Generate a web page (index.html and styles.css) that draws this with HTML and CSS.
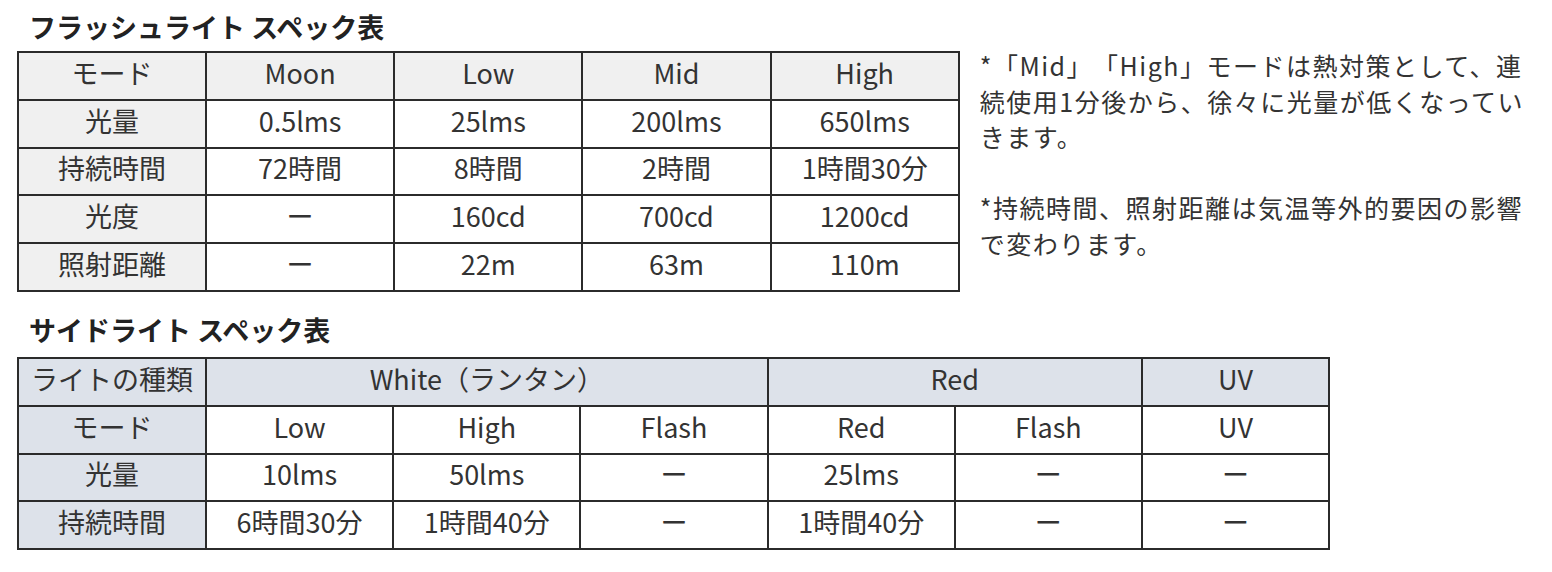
FILE: index.html
```html
<!DOCTYPE html>
<html lang="ja">
<head>
<meta charset="utf-8">
<link rel="stylesheet" href="styles.css">
</head>
<body>
<div class="page">
  <h2 class="title title-first">フラッシュライト スペック表</h2>
  <div class="top-row">
    <table class="spec spec-flash">
      <colgroup><col class="c-label"><col class="c-val"><col class="c-val"><col class="c-val"><col class="c-val"></colgroup>
      <tr class="head-row"><th>モード</th><th>Moon</th><th>Low</th><th>Mid</th><th>High</th></tr>
      <tr><th>光量</th><td>0.5lms</td><td>25lms</td><td>200lms</td><td>650lms</td></tr>
      <tr><th>持続時間</th><td>72時間</td><td>8時間</td><td>2時間</td><td>1時間30分</td></tr>
      <tr><th>光度</th><td>ー</td><td>160cd</td><td>700cd</td><td>1200cd</td></tr>
      <tr><th>照射距離</th><td>ー</td><td>22m</td><td>63m</td><td>110m</td></tr>
    </table>
    <div class="notes">
      <p>*「Mid」「High」モードは熱対策として、連<br>続使用1分後から、徐々に光量が低くなってい<br>きます。</p>
      <p>*持続時間、照射距離は気温等外的要因の影響<br>で変わります。</p>
    </div>
  </div>
  <h2 class="title title-second">サイドライト スペック表</h2>
  <table class="spec spec-side">
    <colgroup><col class="c-label"><col class="c-side"><col class="c-side"><col class="c-side"><col class="c-side"><col class="c-side"><col class="c-side"></colgroup>
    <tr class="head-row side-head"><th>ライトの種類</th><th colspan="3">White（ランタン）</th><th colspan="2">Red</th><th>UV</th></tr>
    <tr><th>モード</th><td>Low</td><td>High</td><td>Flash</td><td>Red</td><td>Flash</td><td>UV</td></tr>
    <tr><th>光量</th><td>10lms</td><td>50lms</td><td>ー</td><td>25lms</td><td>ー</td><td>ー</td></tr>
    <tr><th>持続時間</th><td>6時間30分</td><td>1時間40分</td><td>ー</td><td>1時間40分</td><td>ー</td><td>ー</td></tr>
  </table>
</div>
</body>
</html>
```
FILE: styles.css
```css
* { box-sizing: border-box; }
html, body { margin: 0; padding: 0; background: #ffffff; }
body {
  font-family: "Noto Sans CJK JP", "Noto Sans", sans-serif;
  color: #333333;
  text-spacing-trim: space-all;
}
.page {
  padding: 11px 0 0 17px;
}
.title {
  margin: 0;
  padding-left: 12px;
  font-size: 27px;
  line-height: 32px;
  font-weight: 700;
  color: #222222;
}
.title-first { margin-bottom: 8px; }
.title-second { margin-top: 22px; margin-bottom: 11px; }
.top-row {
  display: flex;
  align-items: flex-start;
  gap: 20px;
}
.spec {
  border-collapse: collapse;
  table-layout: fixed;
  border: 2px solid #2b2b2b;
}
.spec th, .spec td {
  border: 2px solid #2b2b2b;
  height: 47.8px;
  padding: 0 0 6px 0;
  text-align: center;
  vertical-align: middle;
  font-size: 27px;
  font-weight: 400;
  line-height: 30px;
  white-space: nowrap;
  color: #333333;
}
.c-label { width: 188px; }
.c-val { width: 188.2px; }
.c-side { width: 187.2px; }
.spec-flash { width: 941px; }
.spec-flash th { background: #f0f0f0; }
.spec-flash td { background: #ffffff; }
.spec-side { width: 1312px; }
.spec-side th { background: #dde2ea; }
.spec-side td { background: #ffffff; }
.notes {
  margin-top: -3px;
}
.notes p {
  margin: 0 0 35.5px 0;
  font-size: 25px;
  line-height: 35.5px;
  letter-spacing: 1.5px;
  white-space: nowrap;
  color: #333333;
  text-spacing-trim: space-all;
}
.notes p:last-child { margin-bottom: 0; }
```
